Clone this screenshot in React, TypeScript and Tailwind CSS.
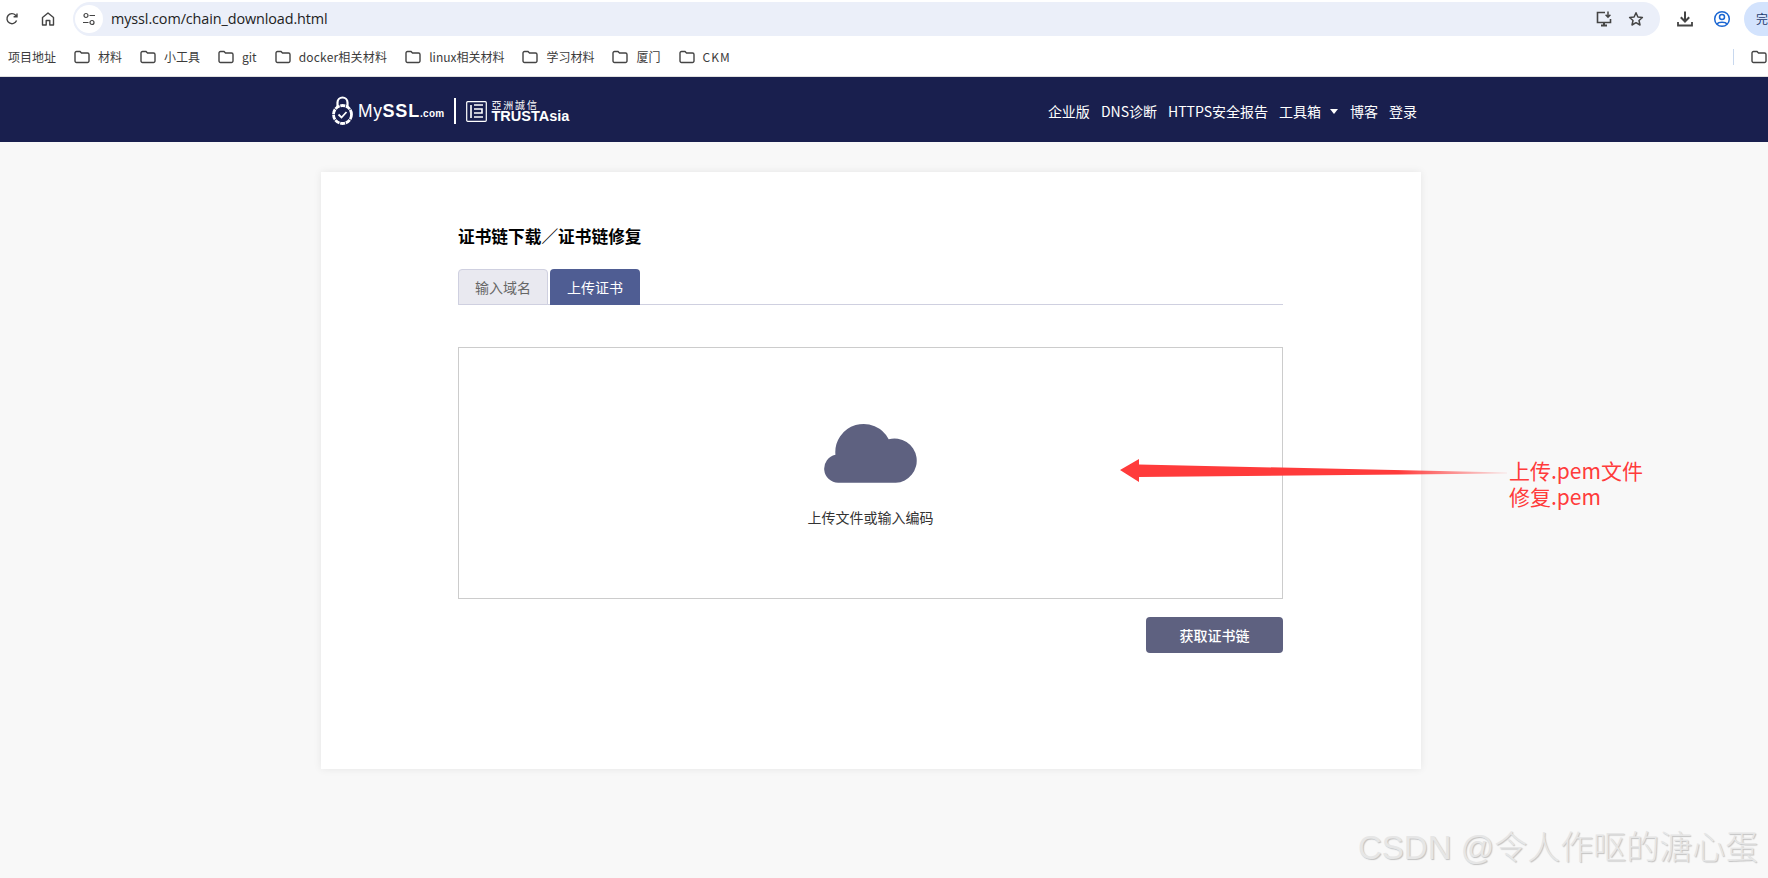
import React from "react";

const sans = '"Noto Sans CJK SC", sans-serif';

function Folder() {
  return (
    <svg width="16" height="14" viewBox="0 0 16 14" fill="none" className="shrink-0">
      <path d="M1 3 A1.5 1.5 0 0 1 2.5 1.5 H6 L7.5 3 H13.5 A1.5 1.5 0 0 1 15 4.5 V11 A1.5 1.5 0 0 1 13.5 12.5 H2.5 A1.5 1.5 0 0 1 1 11 Z" stroke="#444" strokeWidth="1.4" />
    </svg>
  );
}

function Mark({ label, className }: { label: string; className?: string }) {
  return (
    <div className="mr-[18px] flex items-center gap-2">
      <Folder />
      <span className={"text-[12px] leading-none text-[#3c3c3c] " + (className ?? "")}>{label}</span>
    </div>
  );
}

export default function App() {
  return (
    <div className="relative h-[878px] w-[1768px] overflow-hidden bg-[#f8f8f8]" style={{ fontFamily: sans }}>
      {/* toolbar */}
      <div className="flex h-[38px] items-center bg-white pl-[5px]">
        <svg width="14" height="14" viewBox="0 0 14 14" fill="none" className="shrink-0">
          <path d="M11.6 8.6 A5 5 0 1 1 10.6 3.2 L12 4.6 M12 1.4 V4.8 H8.6" stroke="#444" strokeWidth="1.4" />
        </svg>
        <svg width="16" height="16" viewBox="0 0 16 16" fill="none" className="ml-[21px] shrink-0">
          <path d="M2.5 14 V6.5 L8 2 L13.5 6.5 V14 H9.8 V9.5 H6.2 V14 Z" stroke="#444" strokeWidth="1.4" strokeLinejoin="round" />
        </svg>
        <div className="ml-[17px] flex h-[34px] w-[1587px] shrink-0 items-center rounded-full bg-[#ebeff9] pl-[2px] pr-[16px]">
          <div className="flex h-[28px] w-[28px] items-center justify-center rounded-full bg-white">
            <svg width="14" height="14" viewBox="0 0 14 14" fill="none">
              <circle cx="4" cy="3.5" r="2" stroke="#444" strokeWidth="1.2" />
              <path d="M7.5 3.5 H13 M1 10.5 H6.5" stroke="#444" strokeWidth="1.2" />
              <circle cx="10" cy="10.5" r="2" stroke="#444" strokeWidth="1.2" />
            </svg>
          </div>
          <span className="ml-[8px] text-[14.4px] leading-none text-[#222]" style={{ fontFamily: '"Open Sans", sans-serif', letterSpacing: "-0.1px" }}>myssl.com/chain_download.html</span>
          <div className="ml-auto flex items-center gap-[16px]">
            <svg width="16" height="16" viewBox="0 0 16 16" fill="none">
              <path d="M9 1.5 H1.5 V11.5 H14.5 V8" stroke="#444" strokeWidth="1.6" />
              <path d="M5 14.5 H11 M8 11.5 V14.5" stroke="#444" strokeWidth="2" />
              <path d="M12 0.5 V6 M9.6 3.8 L12 6.2 L14.4 3.8" stroke="#444" strokeWidth="1.5" />
            </svg>
            <svg width="16" height="16" viewBox="0 0 16 16" fill="none">
              <path d="M8 1.8 L9.9 6 L14.4 6.5 L11 9.5 L12 14 L8 11.7 L4 14 L5 9.5 L1.6 6.5 L6.1 6 Z" stroke="#444" strokeWidth="1.5" strokeLinejoin="round" />
            </svg>
          </div>
        </div>
        <svg width="18" height="18" viewBox="0 0 18 18" fill="none" className="ml-[16px] shrink-0">
          <path d="M9 1.5 V11 M4.8 7.2 L9 11.5 L13.2 7.2" stroke="#444" strokeWidth="2" />
          <path d="M2 12 V15.5 H16 V12" stroke="#444" strokeWidth="1.8" />
        </svg>
        <svg width="18" height="18" viewBox="0 0 18 18" fill="none" className="ml-[19px] shrink-0">
          <circle cx="9" cy="9" r="7.3" stroke="#1a66d2" strokeWidth="1.5" />
          <circle cx="9" cy="7" r="2.5" stroke="#1a66d2" strokeWidth="1.5" />
          <path d="M4.2 14 C5.5 11.5 12.5 11.5 13.8 14" stroke="#1a66d2" strokeWidth="1.5" />
        </svg>
        <div className="ml-[13px] flex h-[34px] w-[60px] shrink-0 items-center whitespace-nowrap rounded-l-full bg-[#d3e3fd] pl-[12px] text-[12px] text-[#1f3a6e]">完</div>
      </div>

      {/* bookmarks */}
      <div className="flex h-[39px] items-center border-b border-[#e0e0e0] bg-white pl-[8px]">
        <span className="mr-[18px] text-[12px] leading-none text-[#3c3c3c]">项目地址</span>
        <Mark label="材料" />
        <Mark label="小工具" />
        <Mark label="git" />
        <Mark label="docker相关材料" className="tracking-[0.2px]" />
        <Mark label="linux相关材料" />
        <Mark label="学习材料" />
        <Mark label="厦门" />
        <Mark label="CKM" className="tracking-[1px]" />
        <div className="ml-auto mr-[17px] h-[16px] w-px bg-[#c8d8ee]" />
        <div className="w-[17px] overflow-hidden"><Folder /></div>
      </div>

      {/* site nav */}
      <div className="flex h-[65px] items-center justify-between bg-[#191f4e] pl-[331px] pr-[351px] pt-[3px]">
        <div className="flex items-center text-white">
          <svg width="23" height="30" viewBox="0 0 23 30" fill="none" className="shrink-0">
            <path d="M6.5 12 V6.5 A5 5 0 0 1 16.5 6.5 V12" stroke="white" strokeWidth="2.2" />
            <circle cx="11.5" cy="18.5" r="9" stroke="white" strokeWidth="2.8" strokeDasharray="5 0.7" />
            <path d="M7.5 18.5 L10.5 21.5 L15.5 16" stroke="white" strokeWidth="1.8" />
          </svg>
          <span className="ml-[4px] flex items-baseline leading-none" style={{ fontFamily: '"Liberation Sans", sans-serif' }}>
            <span className="text-[17.5px] font-normal tracking-[0.6px]">My</span>
            <span className="text-[18px] font-bold tracking-[0.8px]">SSL</span>
            <span className="text-[10px] font-bold tracking-[0.3px]">.com</span>
          </span>
          <div className="ml-[9px] h-[26px] w-[2px] bg-white" />
          <svg width="21" height="21" viewBox="0 0 21 21" fill="none" className="ml-[10px] shrink-0">
            <rect x="0.7" y="0.7" width="19.6" height="19.6" rx="1" stroke="white" strokeWidth="1.2" />
            <path d="M5 4 V17 M8 4 H17 M8 8 H16 V12 H8 M8 16 H17" stroke="white" strokeWidth="1.6" />
          </svg>
          <div className="ml-[5px] flex flex-col">
            <span className="text-[10px] leading-[10px] tracking-[1.8px]">亞洲誠信</span>
            <span className="mt-[1px] text-[14.5px] font-bold leading-[11px]" style={{ fontFamily: '"Liberation Sans", sans-serif' }}>TRUSTAsia</span>
          </div>
        </div>
        <div className="flex items-center gap-[11px] text-[14px] leading-none text-white">
          <span>企业版</span>
          <span>DNS诊断</span>
          <span>HTTPS安全报告</span>
          <span className="flex items-center">
            工具箱
            <svg width="8" height="5" viewBox="0 0 8 5" className="ml-[9px]"><path d="M0 0 H8 L4 5 Z" fill="white" /></svg>
          </span>
          <span className="ml-[1px]">博客</span>
          <span>登录</span>
        </div>
      </div>

      {/* card */}
      <div className="ml-[321px] mt-[30px] h-[597px] w-[1100px] bg-white pl-[137px] pr-[138px] pt-[53px] shadow-[0_0_8px_rgba(0,0,0,0.08)]">
        <h1 className="text-[16.7px] font-bold leading-[22px] text-black">证书链下载／证书链修复</h1>
        <div className="mt-[22px] flex h-[36px] gap-[2px] border-b border-[#cfd0e0]">
          <div className="flex h-[36px] w-[90px] items-center justify-center rounded-t border border-[#cfd0e0] bg-[#e9e9f0] text-[14px] text-[#666]">输入域名</div>
          <div className="flex h-[36px] w-[90px] items-center justify-center rounded-t bg-[#4f5d93] text-[14px] text-white">上传证书</div>
        </div>
        <div className="mt-[42px] flex h-[252px] flex-col items-center border border-[#cccccc] pt-[75px]">
          <svg width="94" height="60" viewBox="0 0 93 59" fill="#5e6180" className="shrink-0">
            <path d="M14 59 A14 14 0 0 1 11.3 31.3 A28 28 0 0 1 64 15.8 A22 22 0 1 1 71 59 Z" />
          </svg>
          <p className="mt-[23px] text-[14px] leading-[22px] text-[#333]">上传文件或输入编码</p>
        </div>
        <div className="mt-[18px] flex justify-end">
          <button className="h-[36px] w-[137px] rounded bg-[#5e6180] text-[14px] font-medium text-white">获取证书链</button>
        </div>
      </div>

      {/* screenshot annotation */}
      <svg width="400" height="30" viewBox="0 0 400 30" className="absolute left-[1119px] top-[458px]">
        <defs>
          <linearGradient id="tail" x1="0" x2="1" y1="0" y2="0">
            <stop offset="0" stopColor="#ff3b3b" />
            <stop offset="0.72" stopColor="#ff3b3b" />
            <stop offset="1" stopColor="#ff3b3b" stopOpacity="0.1" />
          </linearGradient>
        </defs>
        <path d="M1 12 L20 1 L20 6.5 L388 14.5 L388 15.5 L20 19 L20 24 Z" fill="url(#tail)" />
      </svg>
      <div className="absolute left-[1509px] top-[457px] text-[21px] leading-[26px] text-[#ff3b3b]">
        <div>上传.pem文件</div>
        <div>修复.pem</div>
      </div>
      <div
        className="absolute left-[1358px] top-[826px] whitespace-nowrap text-[33px] font-light leading-[44px] text-[#e6e6e6] [text-shadow:1px_1px_1px_#c2c2c2]"
        style={{ fontFamily: '"Liberation Sans", "Noto Sans CJK SC", sans-serif' }}
      >
        CSDN @令人作呕的溏心蛋
      </div>
    </div>
  );
}
